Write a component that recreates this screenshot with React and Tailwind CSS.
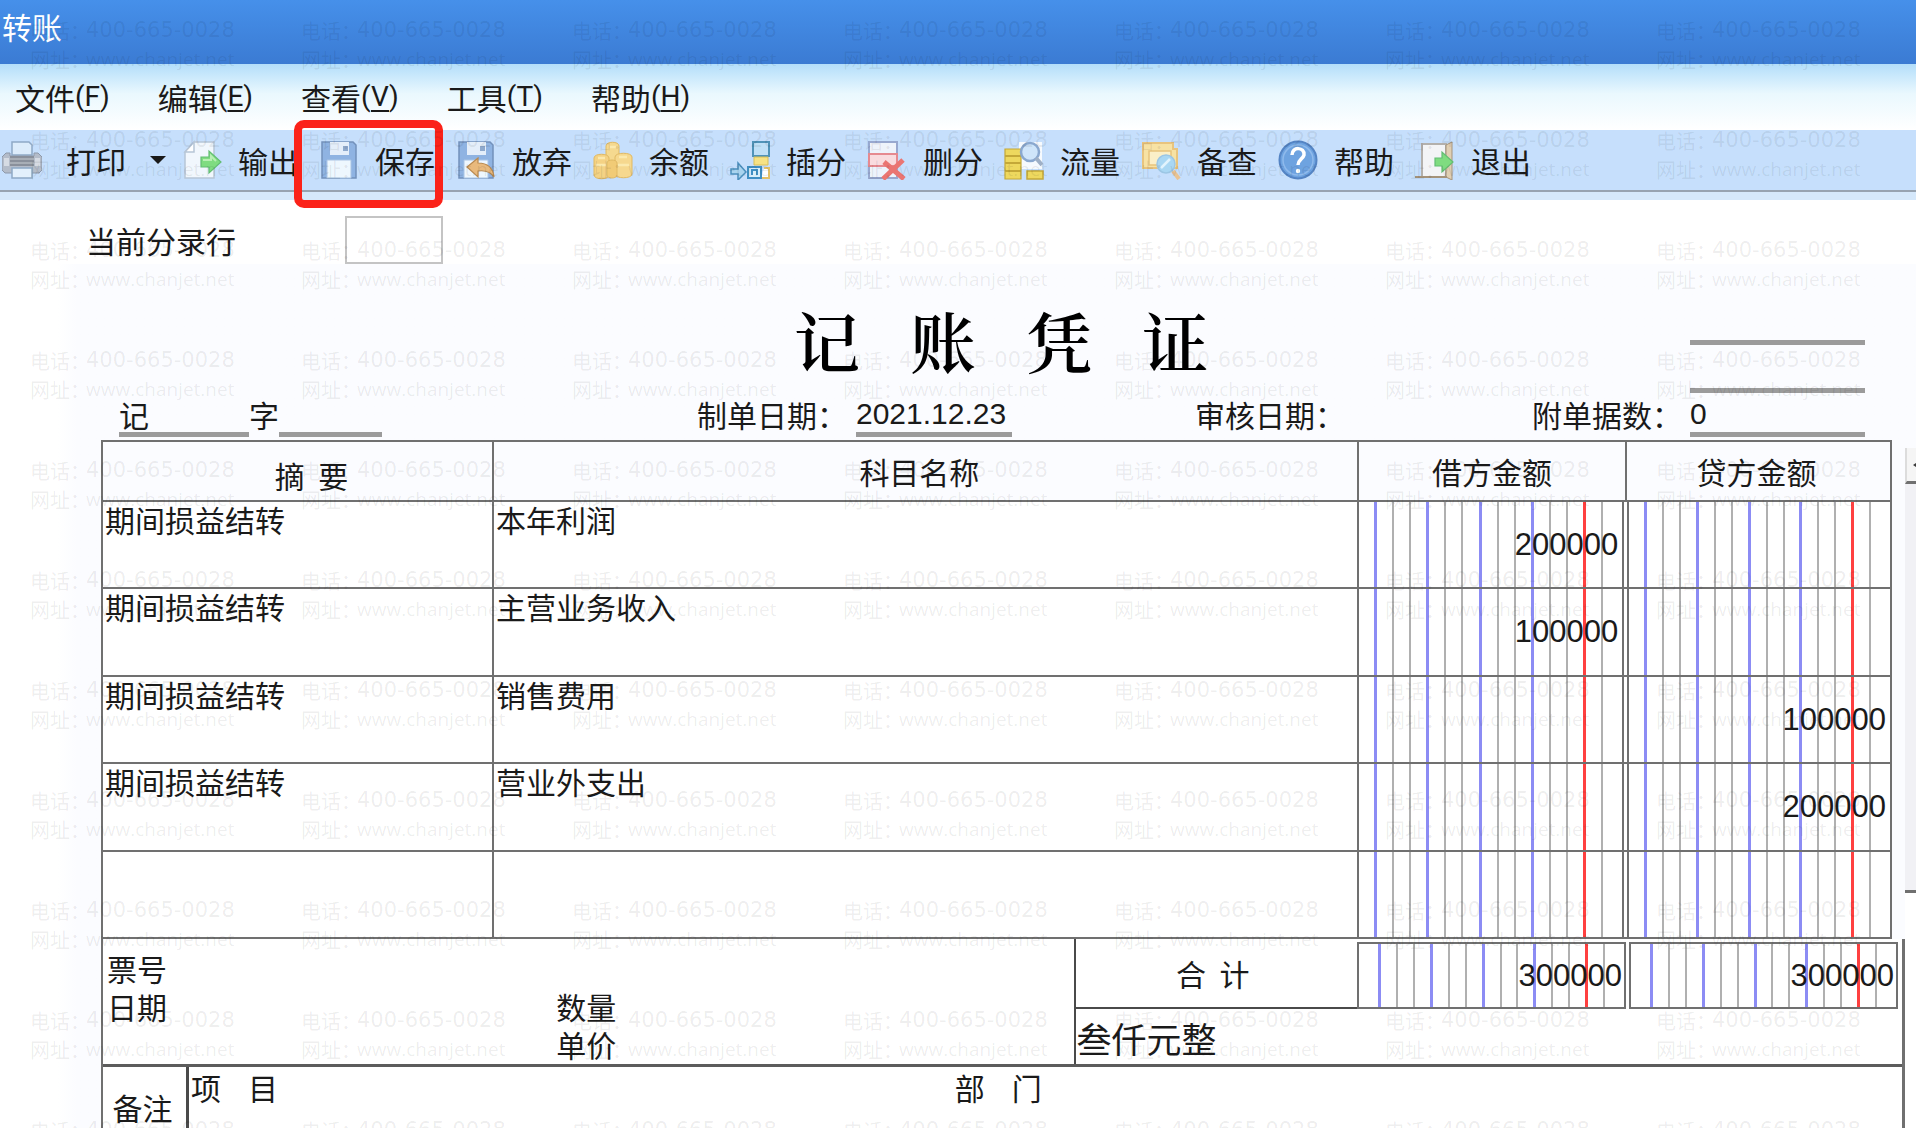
import React, { useState } from 'react';

const MENUS = [
  { label: '文件', key: 'F' },
  { label: '编辑', key: 'E' },
  { label: '查看', key: 'V' },
  { label: '工具', key: 'T' },
  { label: '帮助', key: 'H' },
];

const ENTRIES = [
  { summary: '期间损益结转', account: '本年利润', debit: '200000', credit: '' },
  { summary: '期间损益结转', account: '主营业务收入', debit: '100000', credit: '' },
  { summary: '期间损益结转', account: '销售费用', debit: '', credit: '100000' },
  { summary: '期间损益结转', account: '营业外支出', debit: '', credit: '200000' },
  { summary: '', account: '', debit: '', credit: '' },
];

const Svg = ({ children }) => (
  <svg viewBox="0 0 40 40" className="w-10 h-10 shrink-0" fill="none" aria-hidden="true">
    {children}
  </svg>
);

const PrintIcon = () => (
  <Svg>
    <path d="M10 2h17l3 3v10H10z" fill="#dcecfb" stroke="#8fa9c6" strokeWidth="1.5" />
    <path d="M4 13h4v3h24v-3h4l4 4v13l-3 3H3l-3-3V17z" fill="#b4bcc9" stroke="#8d98a9" strokeWidth="1" />
    <path d="M8 16h24v10H8z" fill="#8a909b" />
    <path d="M8 19h24M8 23h24" stroke="#b3b8c0" strokeWidth="1.5" />
    <path d="M2 18h5v8H2zM33 18h5v8h-5z" fill="#d6dbe3" />
    <path d="M10 28h20v10H10z" fill="#e3f0fc" stroke="#8fa9c6" strokeWidth="1.5" />
  </Svg>
);

const ExportIcon = () => (
  <Svg>
    <path d="M12 2h20v36H3V12z" fill="#f1f7fd" stroke="#b7c6d6" strokeWidth="1.5" />
    <path d="M12 2v10H3z" fill="#fff" stroke="#b7c6d6" strokeWidth="1.5" />
    <path d="M19 17h8v-6l12 11-12 11v-6h-8z" fill="#7fdc80" stroke="#62bd72" strokeWidth="1.2" />
    <path d="M21 20h8v-4l5 5" stroke="#b9efb4" strokeWidth="2" />
  </Svg>
);

const Floppy = () => (
  <>
    <path d="M3 2h31l3 3v33H3z" fill="#8fb3e2" stroke="#7391bb" strokeWidth="1.5" />
    <path d="M11 2h19v13H11z" fill="#e4eefa" />
    <path d="M24 6h5v5h-5z" fill="#8ea9cd" />
    <path d="M8 20h24v18H8z" fill="#eef7fe" stroke="#a9c4e4" strokeWidth="1" />
  </>
);

const SaveIcon = () => (
  <Svg>
    <Floppy />
  </Svg>
);

const DiscardIcon = () => (
  <Svg>
    <Floppy />
    <path d="M11 27l11-9v5c10 0 15 5 16 14-4-6-9-7-16-6v6z" fill="#e9b97c" stroke="#b9894f" strokeWidth="1.2" />
  </Svg>
);

const CoinsIcon = () => (
  <Svg>
    <path d="M13 6c0-5 13-5 13 0v16H13z" fill="#f5d98f" stroke="#e0b963" strokeWidth="1" />
    <path d="M1 18c0-5 15-5 15 0v17c0 5-15 5-15 0z" fill="#f4d284" stroke="#e0b963" strokeWidth="1" />
    <path d="M22 17c0-5 17-5 17 0v17c0 5-17 5-17 0z" fill="#f6d88e" stroke="#e0b963" strokeWidth="1" />
    <path d="M14 23c0-4 10-4 10 0v12c0 4-10 4-10 0z" fill="#f1cb76" stroke="#e0b963" strokeWidth="1" />
    <path d="M17 7h6M5 18h7M26 17h8M3 25h10M25 25h11" stroke="#fbe9ae" strokeWidth="2.5" />
  </Svg>
);

const InsertIcon = () => (
  <Svg>
    <path d="M23 2h16v14H23z" fill="#bfe0f7" stroke="#4f93b8" strokeWidth="2" />
    <path d="M24 17h14v8H24z" fill="#f6e284" stroke="#d8bf57" strokeWidth="1" />
    <path d="M34 28h5v10h-8" fill="#fff" stroke="#e3c067" strokeWidth="2" />
    <path d="M1 29h7v-6l8 9-8 8v-6H1z" fill="#a9d4ef" stroke="#4b8fbd" strokeWidth="1.5" />
    <path d="M18 27h13v11H18z" fill="#d8eefb" stroke="#3f8fc4" strokeWidth="2" />
    <path d="M22 35v-5h5v5" stroke="#3f8fc4" strokeWidth="2" />
  </Svg>
);

const DeleteIcon = () => (
  <Svg>
    <path d="M2 2h28v36H2z" fill="#eef3fb" stroke="#98a8cf" strokeWidth="2" />
    <path d="M2 14h28v12H2z" fill="#f9dcdf" stroke="#e68a90" strokeWidth="2" />
    <path d="M17 22l20 17M36 20L16 39" stroke="#ea7572" strokeWidth="5" />
  </Svg>
);

const FlowIcon = () => (
  <Svg>
    <path d="M15 2h23v27H15z" fill="#f6fafe" />
    <path d="M1 9h16v30H1z" fill="#eed85e" stroke="#c4a838" strokeWidth="1.2" />
    <path d="M1 16h16M1 23h16M1 31h16" stroke="#c4a838" strokeWidth="2" />
    <path d="M23 31h16v8H23z" fill="#eed85e" stroke="#c4a838" strokeWidth="1.5" />
    <circle cx="26" cy="12" r="9" fill="#cfe5fa" stroke="#8aa8cf" strokeWidth="2.5" />
    <path d="M32 18l6 7" stroke="#9fb0c6" strokeWidth="4" />
  </Svg>
);

const ReviewIcon = () => (
  <Svg>
    <path d="M2 3h30v6h4v19H2z" fill="#f7e2a4" stroke="#e8c47e" strokeWidth="2" />
    <path d="M8 11h22v14H8z" fill="#fbefc8" stroke="#e7c47c" strokeWidth="1.5" />
    <circle cx="25" cy="24" r="9" fill="#a9d7f3" stroke="#9cc6e4" strokeWidth="1.5" />
    <path d="M20 28l9-9" stroke="#e1f3fd" strokeWidth="2.5" />
    <path d="M32 31l6 8" stroke="#e9c393" strokeWidth="4" />
  </Svg>
);

const HelpIcon = () => (
  <Svg>
    <circle cx="20" cy="20" r="18.5" fill="#6ea3e0" stroke="#5484c4" strokeWidth="2" />
    <circle cx="20" cy="20" r="15" stroke="#8fbaec" strokeWidth="1.5" />
    <path d="M14 15c0-9 13-8 12 0-1 4-6 5-6 10" stroke="#fff" strokeWidth="3.5" />
    <circle cx="20" cy="31" r="2.2" fill="#fff" />
  </Svg>
);

const ExitIcon = () => (
  <Svg>
    <path d="M7 4h24v33H7z" fill="#f3f4f6" stroke="#b3b0ac" strokeWidth="2" />
    <path d="M31 5l6-3v38l-6-3z" fill="#e0cfb3" stroke="#a5937a" strokeWidth="1" />
    <path d="M0 37h32" stroke="#a5937a" strokeWidth="2" />
    <path d="M20 18h7v-6l11 10-11 10v-6h-7z" fill="#7fdc80" stroke="#62bd72" strokeWidth="1.2" />
  </Svg>
);

const TOOLS = [
  { label: '输出', Icon: ExportIcon },
  { label: '保存', Icon: SaveIcon, marked: true },
  { label: '放弃', Icon: DiscardIcon },
  { label: '余额', Icon: CoinsIcon },
  { label: '插分', Icon: InsertIcon },
  { label: '删分', Icon: DeleteIcon },
  { label: '流量', Icon: FlowIcon },
  { label: '备查', Icon: ReviewIcon },
  { label: '帮助', Icon: HelpIcon },
  { label: '退出', Icon: ExitIcon },
];

// Digit ruling: every third line is blue, the decimal line is red
const ruleColor = (i) => {
  if (i === 14) return 'border-r-0';
  if (i === 12) return 'border-r-[3px] border-[#ff4040]';
  if (i % 3 === 0) return 'border-r-[3px] border-[#8c8cf4]';
  return 'border-r-2 border-[#b0b0b0]';
};

function Ruling() {
  return (
    <div className="flex h-full pr-1">
      {Array.from({ length: 15 }, (_, i) => (
        <span key={i} className={`flex-1 ${ruleColor(i)}`} />
      ))}
    </div>
  );
}

function AmountCell({ value, side }) {
  const frame = side === 'debit' ? 'left-0 right-[2px] border-r-2' : 'left-px right-0 border-l-2';
  const pad = side === 'debit' ? 'pr-2' : 'pr-1';
  return (
    <td className="relative border-y-2 border-[#707070] p-0 align-middle">
      <div className={`absolute inset-y-0 ${frame} border-[#707070]`}>
        <Ruling />
      </div>
      <div className={`relative ${pad} text-right font-['Liberation_Sans',sans-serif] text-[31px] leading-9`}>{value}</div>
    </td>
  );
}

function TotalBox({ value }) {
  return (
    <div className="relative flex flex-1 items-center justify-end border-2 border-[#707070]">
      <div className="absolute inset-y-0 left-1 right-0">
        <Ruling />
      </div>
      <span className="relative pr-[2px] font-['Liberation_Sans',sans-serif] text-[31px] leading-9">{value}</span>
    </div>
  );
}

function Watermark() {
  return (
    <div className="pointer-events-none absolute inset-0 overflow-hidden text-black/8" aria-hidden="true">
      <div className="grid auto-rows-[110px] grid-cols-[repeat(7,271px)] pl-[30px] pt-[16px] text-[20px]">
        {Array.from({ length: 77 }, (_, i) => (
          <div key={i} className="whitespace-nowrap leading-[29px]">
            <div className="flex">
              <span className="w-14">电话：</span>
              <span className="font-['DejaVu_Sans',sans-serif] text-[21px]">400-665-0028</span>
            </div>
            <div className="flex">
              <span className="w-14">网址：</span>
              <span className="font-['Open_Sans',sans-serif] text-[19px]">www.chanjet.net</span>
            </div>
          </div>
        ))}
      </div>
    </div>
  );
}

export default function App() {
  const [line, setLine] = useState('');
  const [word, setWord] = useState('记');
  const [number, setNumber] = useState('');
  const [date, setDate] = useState('2021.12.23');
  const [attachments, setAttachments] = useState('0');

  const field = 'h-[45px] w-full min-w-0 border-b-[5px] border-[#9b9b9b] bg-transparent pt-1 leading-9 outline-none';

  return (
    <div className="relative flex h-screen flex-col overflow-hidden bg-white font-['Noto_Sans_CJK_SC',sans-serif] text-[30px] leading-9 text-[#1a1a1a]">
      <header className="flex h-16 shrink-0 items-start bg-linear-to-b from-[#4690ea] to-[#3b7bd3] px-[2px] pt-2 text-white">
        <h1>转账</h1>
      </header>

      <nav className="flex h-[66px] shrink-0 items-center gap-12 bg-linear-to-b from-[#b3defa] via-[#eaf8fe] via-45% to-white pl-[15px]">
        {MENUS.map((m) => (
          <button key={m.key} type="button" className="flex items-center whitespace-nowrap">
            {m.label}
            <span className="font-[Roboto,sans-serif] text-[28px]">
              (<u className="underline-offset-4">{m.key}</u>)
            </span>
          </button>
        ))}
      </nav>

      <div className="flex h-[70px] shrink-0 flex-col bg-[#d5e8fb]">
        <div className="flex h-[62px] items-center border-b-2 border-[#97a3b1] bg-[#c6dffc] pl-[2px]" role="toolbar">
          <button type="button" className="flex w-[180px] shrink-0 items-center">
            <PrintIcon />
            <span className="ml-6">打印</span>
            <span className="ml-6 border-x-8 border-t-8 border-x-transparent border-t-[#1a1a1a]" />
          </button>
          {TOOLS.map(({ label, Icon, marked }) => (
            <button key={label} type="button" className="relative flex w-[137px] shrink-0 items-center gap-4 pr-6">
              <Icon />
              <span className="whitespace-nowrap">{label}</span>
              {marked && (
                <span className="absolute -left-[25px] -top-[20px] h-[88px] w-[149px] rounded-[10px] border-8 border-[#fb2219]" />
              )}
            </button>
          ))}
        </div>
      </div>

      <main className="flex min-h-0 flex-1 flex-col bg-linear-to-r from-white from-3% to-[#fbfcff] to-4%">
        <div className="flex shrink-0 items-center bg-white pt-4">
          <label htmlFor="line" className="w-[345px] pl-[86px]">当前分录行</label>
          <input
            id="line"
            value={line}
            onChange={(e) => setLine(e.target.value)}
            className="h-12 w-[98px] border-2 border-[#c4c4c4] bg-white px-2 outline-none"
          />
        </div>

        <div className="grid h-32 shrink-0 grid-cols-[794fr_896fr_175fr_51fr]">
          <h2 className="col-start-2 whitespace-pre pt-[38px] font-['Noto_Serif_CJK_SC','Noto_Sans_CJK_SC',serif] text-[66px] font-semibold leading-[76px] text-black">
            记   账   凭   证
          </h2>
          <div className="flex flex-col gap-[43px] pt-[76px]">
            <div className="h-[5px] shrink-0 bg-[#9b9b9b]" />
            <div className="h-[5px] shrink-0 bg-[#9b9b9b]" />
          </div>
        </div>

        <div className="grid h-12 shrink-0 grid-cols-[119fr_130fr_30fr_103fr_315fr_159fr_156fr_183fr_150fr_187fr_158fr_175fr_51fr] items-start whitespace-nowrap leading-[44px]">
          <input aria-label="凭证字" value={word} onChange={(e) => setWord(e.target.value)} className={`${field} col-start-2`} />
          <label htmlFor="number">字</label>
          <input id="number" value={number} onChange={(e) => setNumber(e.target.value)} className={field} />
          <label htmlFor="date" className="col-start-6">制单日期：</label>
          <input
            id="date"
            value={date}
            onChange={(e) => setDate(e.target.value)}
            className={`${field} font-['Liberation_Sans',sans-serif]`}
          />
          <span className="col-start-9">审核日期：</span>
          <label htmlFor="attachments" className="col-start-11">附单据数：</label>
          <input
            id="attachments"
            value={attachments}
            onChange={(e) => setAttachments(e.target.value)}
            className={`${field} font-['Liberation_Sans',sans-serif]`}
          />
        </div>

        <div className="flex min-h-0 flex-1">
          <section className="ml-[101px] flex min-w-0 flex-1 flex-col bg-white">
            <div className="shrink-0 bg-[#fbfcff] pr-[13px]">
              <table className="w-full table-fixed border-collapse border-2 border-[#707070] bg-white">
                <colgroup>
                  <col className="w-[21.85%]" />
                  <col className="w-[48.35%]" />
                  <col className="w-[15%]" />
                  <col className="w-[14.8%]" />
                </colgroup>
                <thead className="bg-[#fbfcff]">
                  <tr className="h-[60px] *:border-2 *:border-[#707070] *:p-0 *:font-normal">
                    <th className="whitespace-pre">
                      <div className="pl-7 pt-2">摘  要</div>
                    </th>
                    <th>
                      <div className="pr-3">科目名称</div>
                    </th>
                    <th>借方金额</th>
                    <th>
                      <div className="pr-1">贷方金额</div>
                    </th>
                  </tr>
                </thead>
                <tbody>
                  {ENTRIES.map((row, i) => (
                    <tr key={i} className="h-[87px] even:h-[88px]">
                      <td className="border-2 border-[#707070] p-0 pl-[2px] align-top leading-[34px]">{row.summary}</td>
                      <td className="border-2 border-[#707070] p-0 pl-[2px] align-top leading-[34px]">{row.account}</td>
                      <AmountCell value={row.debit} side="debit" />
                      <AmountCell value={row.credit} side="credit" />
                    </tr>
                  ))}
                </tbody>
              </table>
            </div>

            <div className="flex min-h-0 flex-1 flex-col border-l-2 border-r-[3px] border-[#707070]">
              <div className="grid shrink-0 grid-cols-[972fr_828fr] border-b-[3px] border-[#5c5c5c]">
                <dl className="grid grid-cols-[451fr_520fr] content-start pl-1 pt-[10px] leading-[38px]">
                  <dt>票号</dt>
                  <dt />
                  <dt>日期</dt>
                  <dt>数量</dt>
                  <dt className="col-start-2">单价</dt>
                </dl>
                <div className="border-l-2 border-[#4a4a4a]">
                  <div className="flex h-[70px]">
                    <div className="flex w-[34%] items-center justify-center whitespace-pre border-b-2 border-[#4a4a4a] pr-2">合  计</div>
                    <div className="flex flex-1 gap-[3px] pr-1 pt-[3px]">
                      <TotalBox value="300000" />
                      <TotalBox value="300000" />
                    </div>
                  </div>
                  <div className="h-[55px] text-[35px] leading-[58px]">叁仟元整</div>
                </div>
              </div>

              <div className="flex flex-1">
                <div className="w-[86px] border-r-[3px] border-[#4a4a4a] pt-[22px] pr-1 text-center">备注</div>
                <div className="grid flex-1 grid-cols-[766fr_950fr] whitespace-pre pl-[2px] pt-[2px]">
                  <span>项    目</span>
                  <span>部    门</span>
                </div>
              </div>
            </div>
          </section>

          <div className="flex w-[11px] shrink-0 flex-col">
            <div className="mt-2 flex h-[36px] items-center justify-end border-b-[3px] border-l-2 border-b-[#707070] border-l-[#dcdcdc] bg-[#f5f5f5]">
              <span className="border-y-2 border-r-3 border-y-transparent border-r-[#3a3a3a]" />
            </div>
            <div className="h-[409px] border-b-[3px] border-[#707070] bg-[#f1f1f5]" />
            <div className="flex-1 bg-white" />
          </div>
        </div>
      </main>

      <Watermark />
    </div>
  );
}
